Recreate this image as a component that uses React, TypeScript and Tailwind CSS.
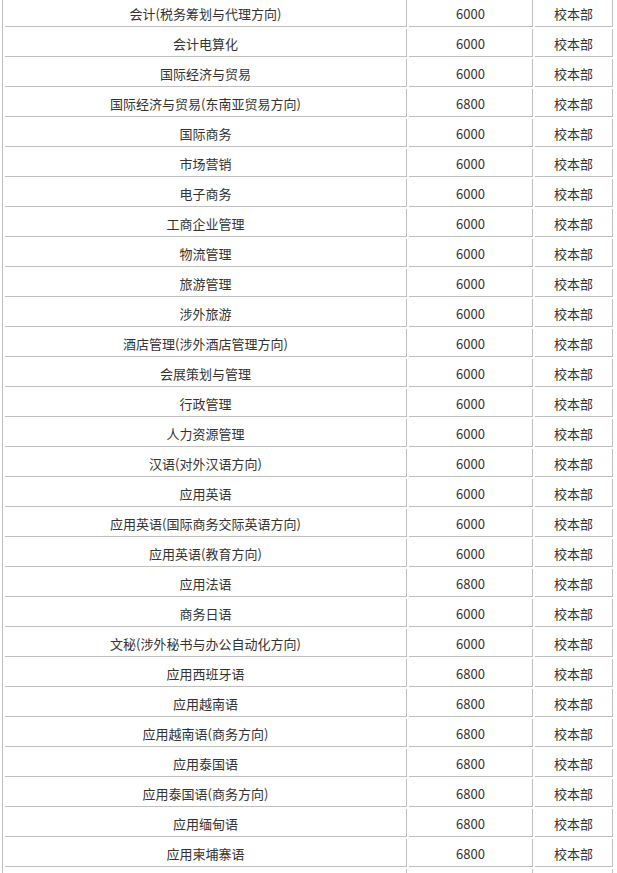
const ROWS: [string, string, string][] = [
  ["会计(税务筹划与代理方向)", "6000", "校本部"],
  ["会计电算化", "6000", "校本部"],
  ["国际经济与贸易", "6000", "校本部"],
  ["国际经济与贸易(东南亚贸易方向)", "6800", "校本部"],
  ["国际商务", "6000", "校本部"],
  ["市场营销", "6000", "校本部"],
  ["电子商务", "6000", "校本部"],
  ["工商企业管理", "6000", "校本部"],
  ["物流管理", "6000", "校本部"],
  ["旅游管理", "6000", "校本部"],
  ["涉外旅游", "6000", "校本部"],
  ["酒店管理(涉外酒店管理方向)", "6000", "校本部"],
  ["会展策划与管理", "6000", "校本部"],
  ["行政管理", "6000", "校本部"],
  ["人力资源管理", "6000", "校本部"],
  ["汉语(对外汉语方向)", "6000", "校本部"],
  ["应用英语", "6000", "校本部"],
  ["应用英语(国际商务交际英语方向)", "6000", "校本部"],
  ["应用英语(教育方向)", "6000", "校本部"],
  ["应用法语", "6800", "校本部"],
  ["商务日语", "6000", "校本部"],
  ["文秘(涉外秘书与办公自动化方向)", "6000", "校本部"],
  ["应用西班牙语", "6800", "校本部"],
  ["应用越南语", "6800", "校本部"],
  ["应用越南语(商务方向)", "6800", "校本部"],
  ["应用泰国语", "6800", "校本部"],
  ["应用泰国语(商务方向)", "6800", "校本部"],
  ["应用缅甸语", "6800", "校本部"],
  ["应用柬埔寨语", "6800", "校本部"],
  // next row is only cut in at the bottom edge, its text lies below the window
  ["", "", ""],
];

const cell =
  "border-r border-b border-[#c0c0c0] text-center pt-[5px] pb-[3px] px-0 leading-[19px] h-[28px] whitespace-nowrap";

export default function App() {
  return (
    <div
      className="h-[873px] overflow-hidden bg-white text-[13px] text-[#333]"
      style={{ fontFamily: '"Noto Sans CJK SC", "Noto Sans", sans-serif' }}
    >
      <table className="table-fixed border-separate border-spacing-[2px] border-l border-[#c0c0c0] ml-[2px] -mt-[3px] w-[613px]">
        <tbody>
          {ROWS.map(([major, fee, campus], i) => (
            <tr key={i}>
              <td className={`${cell} w-[402px]`}>{major}</td>
              <td className={`${cell} w-[124px]`}>{fee}</td>
              <td className={`${cell} w-[78px]`}>{campus}</td>
            </tr>
          ))}
        </tbody>
      </table>
    </div>
  );
}
